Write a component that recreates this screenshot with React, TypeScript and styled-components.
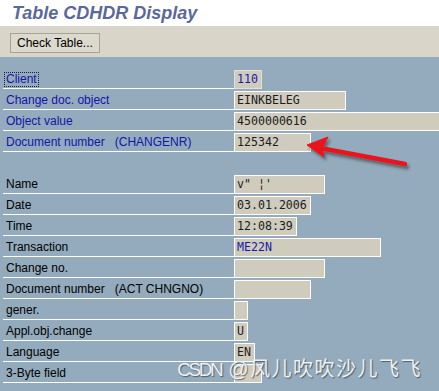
import styled, { createGlobalStyle } from "styled-components";

const GlobalStyle = createGlobalStyle`
  html, body {
    margin: 0;
    padding: 0;
    overflow: hidden;
  }
  body {
    font-family: "Liberation Sans", Arial, sans-serif;
  }
`;

const CHAR = 7;

const Page = styled.div`
  position: relative;
  height: 100vh;
  display: flex;
  flex-direction: column;
  background: #93abbd;
`;

const TitleBar = styled.div`
  height: 26px;
  line-height: 26px;
  padding-left: 12px;
  background: #ffffff;
  border-bottom: 1px solid #d4d4d0;
  color: #5a689b;
  font-size: 18px;
  font-weight: bold;
  font-style: italic;
`;

const Toolbar = styled.div`
  height: 30px;
  box-sizing: border-box;
  padding: 6px 10px;
  background: #d9d6c9;
`;

const ToolButton = styled.button`
  height: 20px;
  padding: 0 6px;
  border: 1px solid #a6a49a;
  background: #dcd9cd;
  color: #000;
  font-family: "Liberation Sans", Arial, sans-serif;
  font-size: 12px;
  line-height: 18px;
  cursor: pointer;
`;

const Body = styled.div`
  flex: 1;
  padding-top: 11px;
  overflow: hidden;
`;

const Row = styled.div`
  display: flex;
  align-items: flex-end;
  height: 21px;
`;

const Spacer = styled.div`
  height: 21px;
`;

const Label = styled.div<{ $blue?: boolean }>`
  box-sizing: border-box;
  flex: none;
  width: 231px;
  height: 21px;
  margin-left: 3px;
  padding: 2px 0 0 3px;
  border-bottom: 1px solid #ffffff;
  color: ${(p) => (p.$blue ? "#1515a8" : "#000")};
  font-size: 12px;
  line-height: 18px;
  white-space: nowrap;
`;

const Focus = styled.span`
  display: inline-block;
  margin-left: -2px;
  padding: 0 1px;
  line-height: 13px;
  border: 1px dotted #1a1a40;
`;

const Tech = styled.span`
  margin-left: 10px;
`;

const Field = styled.div<{ $chars: number; $blue?: boolean; $soft?: boolean }>`
  box-sizing: border-box;
  flex: none;
  width: ${(p) => (p.$chars + 1) * CHAR}px;
  height: 19px;
  padding-left: 2px;
  border: 1px solid ${(p) => (p.$soft ? "#e2dfd3" : "#ffffff")};
  background: #cfcbbd;
  color: ${(p) => (p.$blue ? "#1a1aa8" : "#1c1c1c")};
  font-family: "DejaVu Sans Mono", "Liberation Mono", monospace;
  font-size: 11.6px;
  line-height: 17px;
  white-space: pre;
  overflow: hidden;
`;

const Overlay = styled.svg`
  position: absolute;
  left: 0;
  top: 0;
  pointer-events: none;
`;

const Watermark = styled.div`
  position: absolute;
  right: 17px;
  bottom: 9px;
  color: #eef0f2;
  font-family: "Liberation Sans", "Noto Sans CJK SC", sans-serif;
  font-size: 20px;
  letter-spacing: 1.5px;
  text-shadow: 1px 1px 1px rgba(40, 50, 60, 0.65);
  white-space: nowrap;
  span {
    font-size: 19px;
    letter-spacing: -2.5px;
  }
`;

type Item = {
  label: string;
  tech?: string;
  value: string;
  chars: number;
  blueLabel?: boolean;
  blueValue?: boolean;
  focus?: boolean;
};

const header: Item[] = [
  { label: "Client", value: "110", chars: 3, blueLabel: true, blueValue: true, focus: true },
  { label: "Change doc. object", value: "EINKBELEG", chars: 15, blueLabel: true },
  { label: "Object value", value: "4500000616", chars: 40, blueLabel: true },
  { label: "Document number", tech: "(CHANGENR)", value: "125342", chars: 10, blueLabel: true },
];

const details: Item[] = [
  { label: "Name", value: "v\" ¦'", chars: 12 },
  { label: "Date", value: "03.01.2006", chars: 10 },
  { label: "Time", value: "12:08:39", chars: 8 },
  { label: "Transaction", value: "ME22N", chars: 20, blueValue: true },
  { label: "Change no.", value: "", chars: 12 },
  { label: "Document number", tech: "(ACT CHNGNO)", value: "", chars: 10 },
  { label: "gener.", value: "", chars: 1 },
  { label: "Appl.obj.change", value: "U", chars: 1 },
  { label: "Language", value: "EN", chars: 2 },
  { label: "3-Byte field", value: "", chars: 3 },
];

const FieldRow = ({ item }: { item: Item }) => (
  <Row>
    <Label $blue={item.blueLabel}>
      {item.focus ? <Focus>{item.label}</Focus> : item.label}
      {item.tech && <Tech>{item.tech}</Tech>}
    </Label>
    <Field $chars={item.chars} $blue={item.blueValue} $soft={item.focus}>
      {item.value}
    </Field>
  </Row>
);

const Arrow = () => (
  <Overlay width="439" height="391" viewBox="0 0 439 391">
    <defs>
      <filter id="arrowShadow" x="-20%" y="-50%" width="140%" height="200%">
        <feDropShadow dx="2" dy="3" stdDeviation="1.5" floodColor="#2a2a2a" floodOpacity="0.55" />
      </filter>
    </defs>
    <g filter="url(#arrowShadow)" fill="#e8141a" stroke="#e8141a">
      <line x1="320" y1="148" x2="405" y2="164" strokeWidth="4.5" strokeLinecap="round" />
      <polygon points="307,145 328,137 322,148 324,157" strokeWidth="1" strokeLinejoin="round" />
    </g>
  </Overlay>
);

export default function App() {
  return (
    <>
      <GlobalStyle />
      <Page>
        <TitleBar>Table CDHDR Display</TitleBar>
        <Toolbar>
          <ToolButton>Check Table...</ToolButton>
        </Toolbar>
        <Body>
          {header.map((item) => (
            <FieldRow key={item.label + (item.tech ?? "")} item={item} />
          ))}
          <Spacer />
          {details.map((item) => (
            <FieldRow key={item.label + (item.tech ?? "")} item={item} />
          ))}
        </Body>
        <Arrow />
        <Watermark>
          <span>CSDN</span> @风儿吹吹沙儿飞飞
        </Watermark>
      </Page>
    </>
  );
}
